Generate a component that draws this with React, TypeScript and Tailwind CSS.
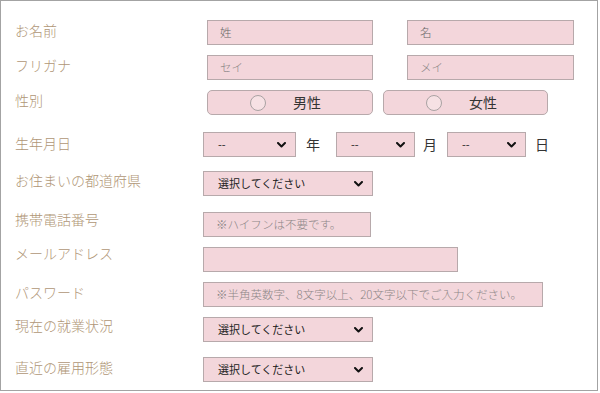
import React from "react";

const font = { fontFamily: '"Noto Sans CJK JP", "Noto Sans", sans-serif' };

function Chevron() {
  return (
    <svg width="9" height="6" viewBox="0 0 9 6" className="shrink-0">
      <path d="M1 1 L4.5 4.5 L8 1" fill="none" stroke="#111" strokeWidth="2" strokeLinecap="round" strokeLinejoin="round" />
    </svg>
  );
}

function Field({ text, className }: { text: string; className: string }) {
  return (
    <div
      className={`h-[25px] bg-[#f3d6db] border border-[#b7a9ab] flex items-center pl-[12px] text-[11.5px] font-light ${className}`}
    >
      {text}
    </div>
  );
}

function Select({ text, className }: { text: string; className: string }) {
  return (
    <div
      className={`h-[25px] bg-[#f3d6db] border border-[#b7a9ab] flex items-center justify-between pl-[14px] pr-[9px] text-[11px] text-[#222] ${className}`}
    >
      <span>{text}</span>
      <Chevron />
    </div>
  );
}

function Radio({ text, className }: { text: string; className: string }) {
  return (
    <div
      className={`h-[25px] bg-[#f3d6db] border border-[#b7a9ab] rounded-[5px] flex items-center text-[14px] text-[#333] ${className}`}
    >
      <span className="ml-[42px] w-[16px] h-[16px] rounded-full border border-[#a9a2a3] bg-[#f6e1e4]" />
      <span className="ml-[27px]">{text}</span>
    </div>
  );
}

function Row({
  label,
  className,
  labelClass,
  children,
}: {
  label: string;
  className: string;
  labelClass: string;
  children: React.ReactNode;
}) {
  return (
    <div className={`flex items-start ${className}`}>
      <div className={`w-[188px] shrink-0 text-[14px] leading-[18px] font-light text-[#b09676] ${labelClass}`}>{label}</div>
      <div className="flex items-center">{children}</div>
    </div>
  );
}

export default function App() {
  return (
    <div className="w-[600px] h-[393px] bg-white" style={font}>
      <div className="w-[598px] h-[391px] border border-[#a3a3a3] pl-[14px] pt-[19px] flex flex-col">
        <Row label="お名前" className="" labelClass="mt-[1px]">
          <Field text="姓" className="ml-[4px] w-[166px] text-[#666]" />
          <Field text="名" className="ml-[34px] w-[167px] text-[#666]" />
        </Row>
        <Row label="フリガナ" className="mt-[10px]" labelClass="mt-[1px]">
          <Field text="セイ" className="ml-[4px] w-[166px] text-[#8d8687]" />
          <Field text="メイ" className="ml-[34px] w-[167px] text-[#8d8687]" />
        </Row>
        <Row label="性別" className="mt-[10px]" labelClass="mt-[1px]">
          <Radio text="男性" className="ml-[4px] w-[166px]" />
          <Radio text="女性" className="ml-[10px] w-[165px]" />
        </Row>
        <Row label="生年月日" className="mt-[17px]" labelClass="mt-[2px]">
          <Select text="--" className="w-[93px]" />
          <span className="ml-[10px] text-[14px] text-[#333]">年</span>
          <Select text="--" className="ml-[16px] w-[79px]" />
          <span className="ml-[8px] text-[14px] text-[#333]">月</span>
          <Select text="--" className="ml-[10px] w-[79px]" />
          <span className="ml-[9px] text-[14px] text-[#333]">日</span>
        </Row>
        <Row label="お住まいの都道府県" className="mt-[14px]" labelClass="mt-0">
          <Select text="選択してください" className="w-[170px]" />
        </Row>
        <Row label="携帯電話番号" className="mt-[16px]" labelClass="-mt-[2px]">
          <Field text="※ハイフンは不要です。" className="w-[168px] text-[#8d8687]" />
        </Row>
        <Row label="メールアドレス" className="mt-[10px]" labelClass="-mt-[3px]">
          <Field text="" className="w-[255px]" />
        </Row>
        <Row label="パスワード" className="mt-[10px]" labelClass="mt-[1px]">
          <Field text="※半角英数字、8文字以上、20文字以下でご入力ください。" className="w-[340px] text-[#8d8687]" />
        </Row>
        <Row label="現在の就業状況" className="mt-[10px]" labelClass="-mt-[1px]">
          <Select text="選択してください" className="w-[170px]" />
        </Row>
        <Row label="直近の雇用形態" className="mt-[15px]" labelClass="mt-[1px]">
          <Select text="選択してください" className="w-[170px]" />
        </Row>
      </div>
    </div>
  );
}
